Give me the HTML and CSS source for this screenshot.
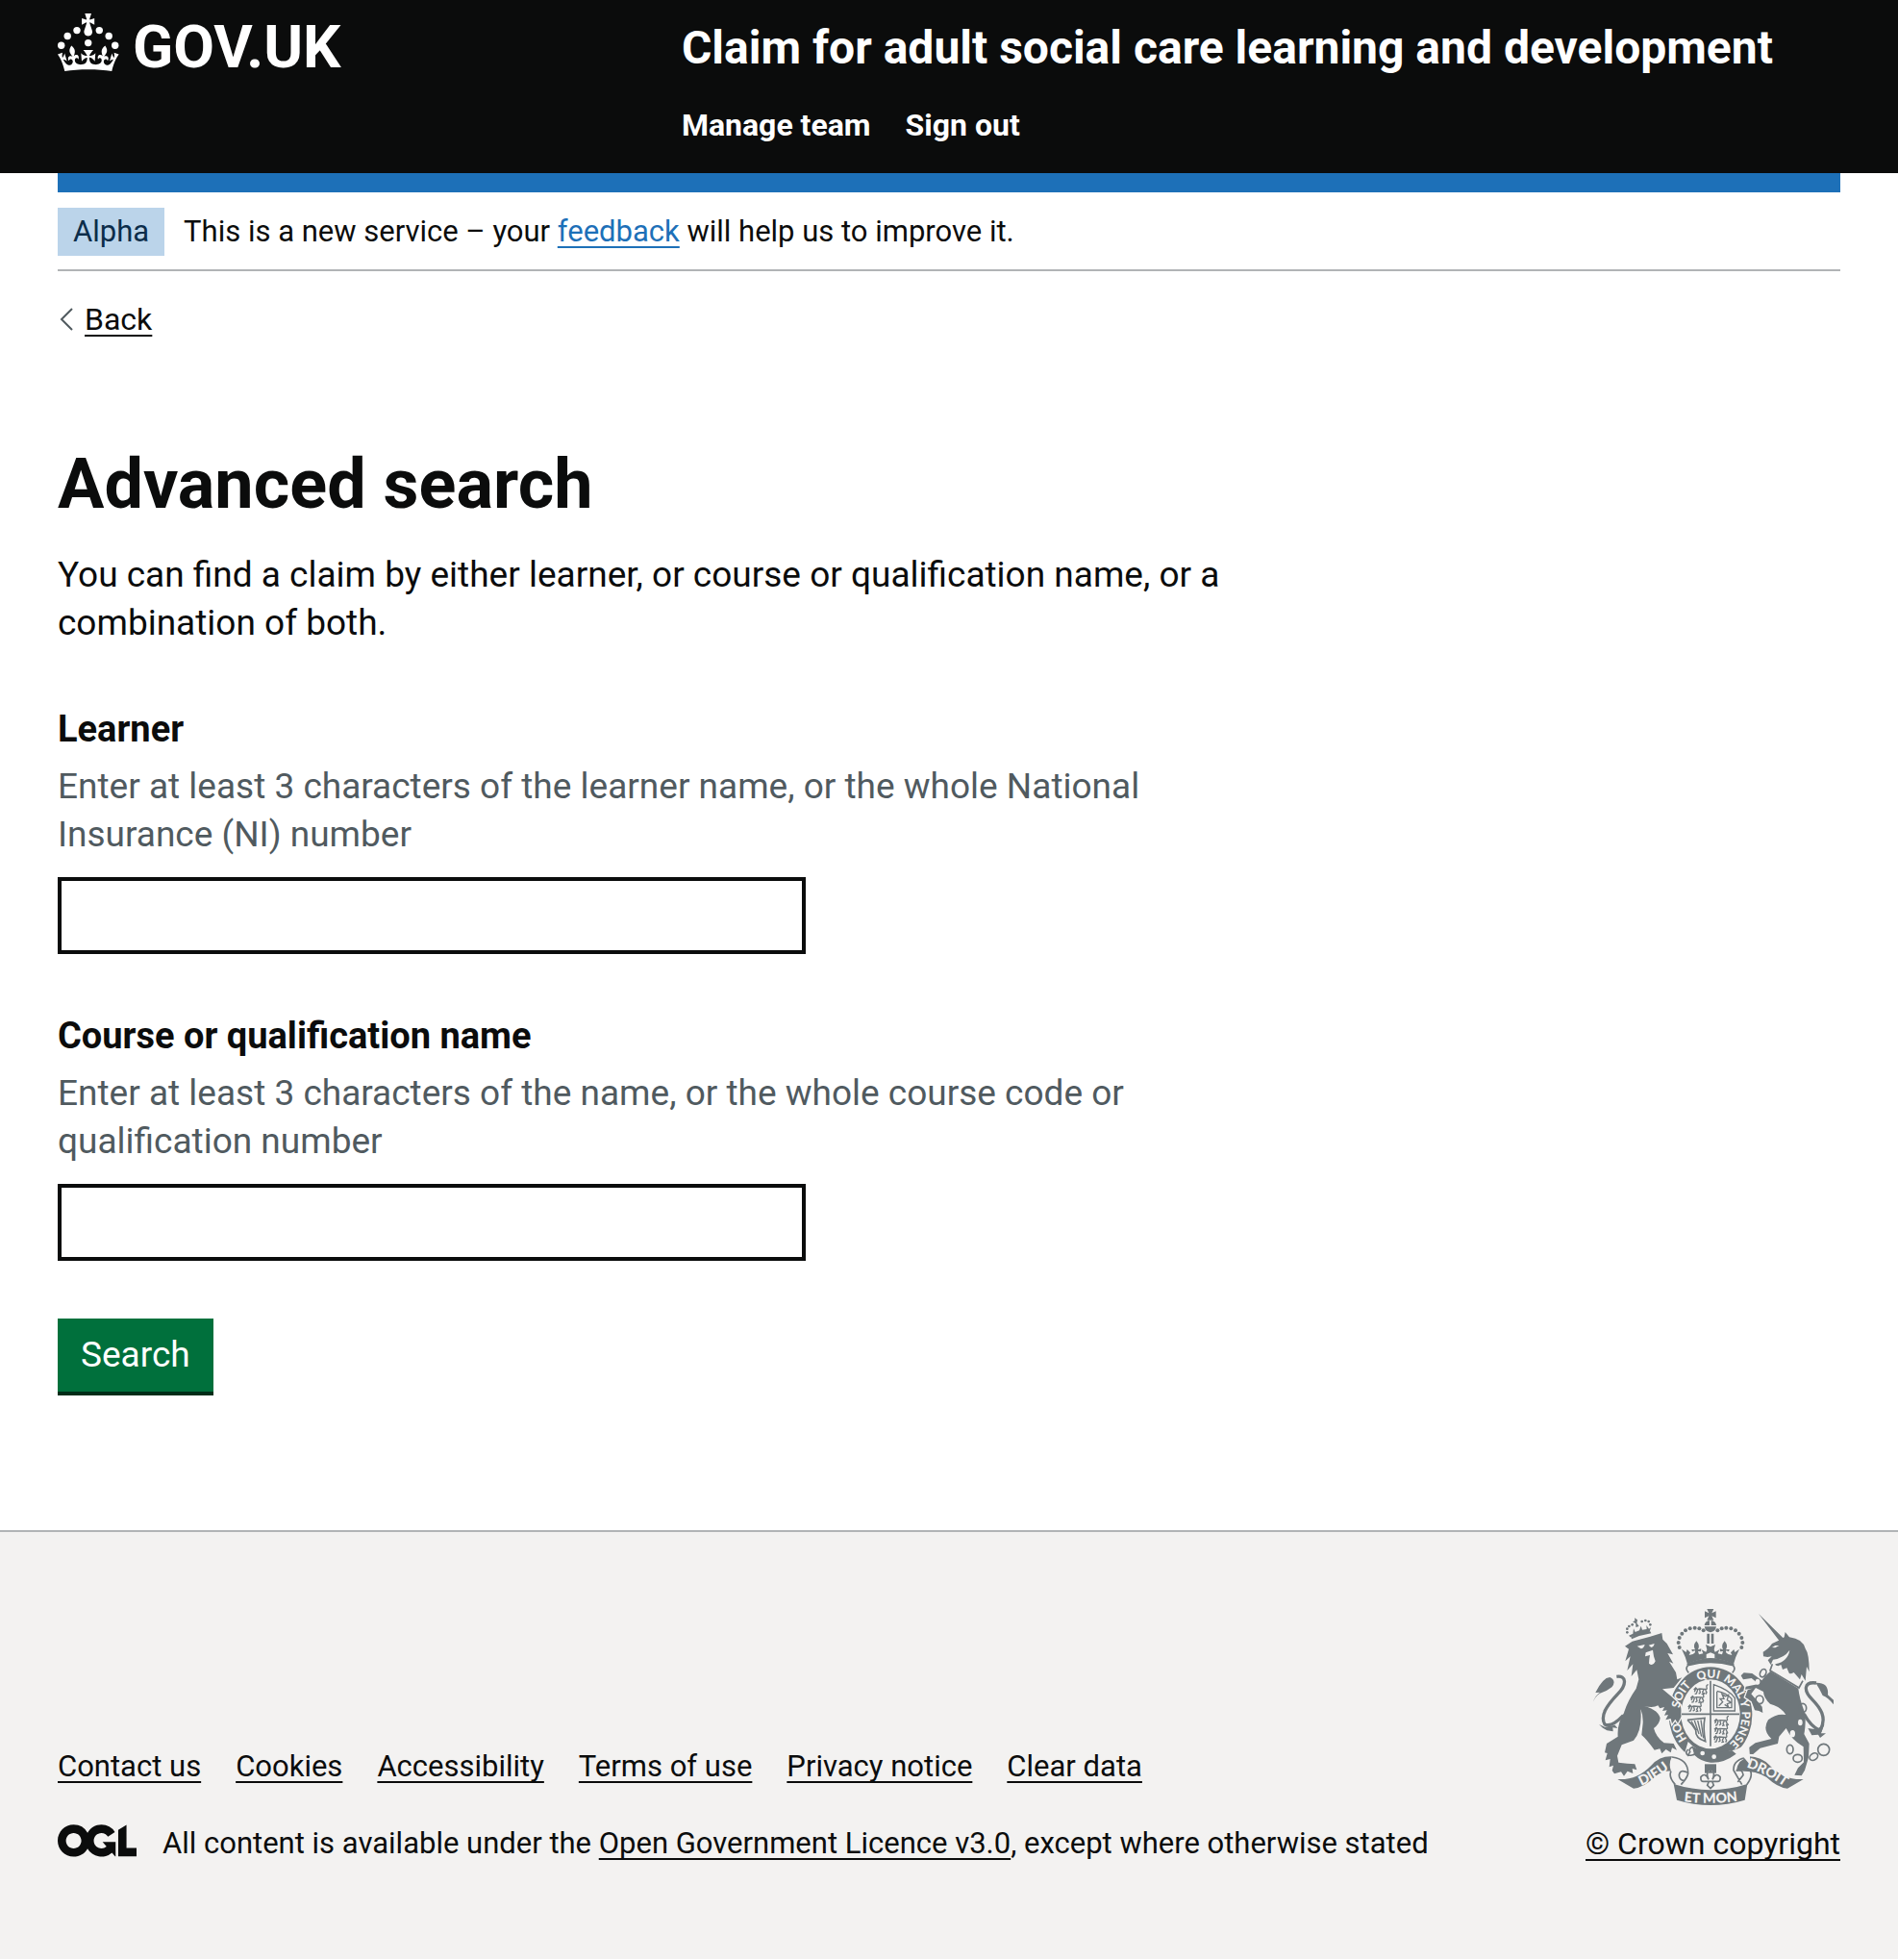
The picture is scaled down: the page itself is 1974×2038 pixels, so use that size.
FILE: index.html
```html
<!DOCTYPE html>
<html lang="en">
<head>
<meta charset="utf-8">
<meta name="viewport" content="width=device-width, initial-scale=1">
<title>Advanced search - Claim for adult social care learning and development - GOV.UK</title>
<link rel="stylesheet" href="styles.css">
</head>
<body>
<header class="header">
  <div class="container header-grid">
    <a class="logo" href="#">
      <svg class="logo-crown" viewBox="0 0 64 60" aria-hidden="true" fill="currentColor">
        <circle cx="20" cy="17.6" r="3.7"/><circle cx="10.2" cy="23.5" r="3.7"/><circle cx="3.7" cy="33.2" r="3.7"/><circle cx="31.7" cy="30.6" r="3.7"/><circle cx="43.3" cy="17.6" r="3.7"/><circle cx="53.2" cy="23.5" r="3.7"/><circle cx="59.7" cy="33.2" r="3.7"/>
        <path d="M33.1,9.8c.2-.1.3-.3.5-.5l4.6,2.4v-6.8l-4.6,1.5c-.1-.2-.3-.3-.5-.5l1.9-5.9h-6.7l1.9,5.9c-.2.1-.3.3-.5.5l-4.6-1.5v6.8l4.6-2.4c.1.2.3.3.5.5l-2.6,8c-.9,2.8,1.2,5.7,4.1,5.7h0c3,0,5.1-2.9,4.1-5.7l-2.6-8ZM37,37.9s-3.4,3.8-4.1,6.1c2.2,0,4.2-.5,6.4-2.8l-.7,8.5c-2-2.8-4.4-4.1-5.7-3.8.1,3.1.5,6.7,5.8,7.2,3.7.3,6.7-1.5,7-3.8.4-2.6-2-4.3-3.7-1.6-1.4-4.5,2.4-6.1,4.9-3.2-1.9-4.5-1.8-7.7,2.4-10.9,3,4,2.6,7.3-1.2,11.1,2.4-1.3,6.2,0,4,4.6-1.2-2.8-3.7-2.2-4.2.2-.3,1.7.7,3.7,3,4.2,1.9.3,4.7-.9,7-5.9-1.3,0-2.4.7-3.9,1.7l2.4-8c.6,2.3,1.4,3.7,2.2,4.5.6-1.6.5-2.8,0-5.3l5,1.8c-2.6,3.6-5.2,8.7-7.3,17.5-7.4-1.1-15.7-1.7-24.5-1.7h0c-8.8,0-17.1.6-24.5,1.7-2.1-8.9-4.7-13.9-7.3-17.5l5-1.8c-.5,2.5-.6,3.7,0,5.3.8-.8,1.6-2.3,2.2-4.5l2.4,8c-1.5-1-2.6-1.7-3.9-1.7,2.3,5,5.2,6.2,7,5.9,2.3-.4,3.3-2.4,3-4.2-.5-2.4-3-3.1-4.2-.2-2.2-4.6,1.6-6,4-4.6-3.7-3.7-4.2-7.1-1.2-11.1,4.2,3.2,4.3,6.4,2.4,10.9,2.5-2.8,6.3-1.3,4.9,3.2-1.8-2.7-4.1-1-3.7,1.6.3,2.3,3.3,4.1,7,3.8,5.4-.5,5.7-4.2,5.8-7.2-1.3-.2-3.7,1-5.7,3.8l-.7-8.5c2.2,2.3,4.2,2.7,6.4,2.8-.7-2.3-4.1-6.1-4.1-6.1h10.6,0Z"/>
      </svg>
      <span class="logo-text">GOV.UK</span>
    </a>
    <div class="header-content">
      <a class="service-name" href="#">Claim for adult social care learning and development</a>
      <nav aria-label="Menu">
        <ul class="nav-list">
          <li><a href="#">Manage team</a></li>
          <li><a href="#">Sign out</a></li>
        </ul>
      </nav>
    </div>
  </div>
</header>

<div class="container">
  <div class="phase-banner">
    <strong class="tag">Alpha</strong>
    <span>This is a new service – your <a class="link" href="#">feedback</a> will help us to improve it.</span>
  </div>
  <a class="back-link" href="#">
    <svg class="chevron" viewBox="0 0 14 24" aria-hidden="true"><path d="M13 1 2 12l11 11" fill="none" stroke="currentColor" stroke-width="2"/></svg>
    <span class="back-text">Back</span>
  </a>
  <main class="main">
    <h1 class="heading">Advanced search</h1>
    <p class="body-text">You can find a claim by either learner, or course or qualification name, or a combination of both.</p>
    <form class="form">
      <div class="form-group">
        <label class="label" for="learner">Learner</label>
        <div class="hint" id="learner-hint">Enter at least 3 characters of the learner name, or the whole National Insurance (NI) number</div>
        <input class="input" id="learner" name="learner" type="text" aria-describedby="learner-hint">
      </div>
      <div class="form-group">
        <label class="label" for="course">Course or qualification name</label>
        <div class="hint" id="course-hint">Enter at least 3 characters of the name, or the whole course code or qualification number</div>
        <input class="input" id="course" name="course" type="text" aria-describedby="course-hint">
      </div>
      <button class="button" type="submit">Search</button>
    </form>
  </main>
</div>

<footer class="footer">
  <div class="container footer-row">
    <div class="footer-meta">
      <ul class="footer-links">
        <li><a href="#">Contact us</a></li>
        <li><a href="#">Cookies</a></li>
        <li><a href="#">Accessibility</a></li>
        <li><a href="#">Terms of use</a></li>
        <li><a href="#">Privacy notice</a></li>
        <li><a href="#">Clear data</a></li>
      </ul>
      <div class="licence">
        <svg class="ogl" viewBox="0 0 483 196" aria-hidden="true" fill="currentColor"><path d="M421.5 142.8V.1l-50.7 32.3v161.1h112.4v-50.7zm-122.3-9.6A47.12 47.12 0 0 1 221 97.8c0-26 21.1-47.1 47.1-47.1 16.7 0 31.4 8.7 39.7 21.8l42.7-27.2A97.63 97.63 0 0 0 268.1 0c-36.5 0-68.3 20.1-85.1 49.7A98 98 0 0 0 97.8 0C43.9 0 0 43.9 0 97.8s43.9 97.8 97.8 97.8c36.5 0 68.3-20.1 85.1-49.7a97.76 97.76 0 0 0 149.6 25.4l19.4 22.2h3v-87.8h-80l24.3 27.5zM97.8 145c-26 0-47.1-21.1-47.1-47.1s21.1-47.1 47.1-47.1 47.1 21.1 47.1 47.1S123.8 145 97.8 145"/></svg>
        <span>All content is available under the <a href="#">Open Government Licence v3.0</a>, except where otherwise stated</span>
      </div>
    </div>
    <div class="crown-copyright">
      <svg class="arms" viewBox="54 42 750 612" aria-hidden="true">
        <defs>
          <path id="garter-line" d="M420 485A98 114 0 0 1 420 257A98 114 0 0 1 420 485"/>
          <path id="scroll-left" d="M186 600Q240 583 306 528"/>
          <path id="scroll-right" d="M522 532Q590 552 658 602"/>
          <path id="scroll-mid" d="M322 641Q420 655 520 639"/>
          <path id="passant" d="M0 6L6 0L11 5L18 3L34 4Q43 6 40-2Q38-8 45-10M6 3L2 13M12 6L8 18L3 19M18 6L20 15L15 19M31 6L27 13L30 19L24 20M36 6L40 14L37 20"/>
          <g id="half-crown">
            <circle cx="398" cy="109" r="6"/><circle cx="385" cy="103" r="6"/><circle cx="371" cy="101" r="6"/><circle cx="356" cy="103" r="6"/><circle cx="342" cy="109" r="6"/><circle cx="331" cy="119" r="6"/><circle cx="323" cy="132" r="6"/><circle cx="320" cy="147" r="6"/><circle cx="323" cy="162" r="6"/>
            <path d="M330 167L344 177L347 168L357 178L353 186L365 183Q375 178 371 172L363 175L361 168L372 169Q364 156 376 142Q388 156 381 169L391 166L390 175L381 174L384 184L397 181L392 169L407 177L407 205L420 205L420 195Q385 197 348 214Q342 190 330 167Z"/>
          </g>
        </defs>
        <g class="arms-fill">
          <!-- garter -->
          <ellipse cx="420" cy="372" rx="130" ry="149"/>
          <!-- crown -->
          <path d="M409 42H430L424 55L437 49V70L424 64L430 77H409L415 64L402 70V49L415 55Z"/>
          <path d="M401 93Q403 80 417 78V93ZM422 78Q436 80 438 93H422Z"/>
          <path d="M401 97H438Q435 113 420 115Q404 113 401 97Z"/>
          <path d="M409 119H417V150H409ZM422 119H430V150H422Z"/>
          <path d="M405 153L420 160L435 153L431 169L438 185L420 178L402 185L409 169Z"/>
          <use href="#half-crown"/><use href="#half-crown" transform="matrix(-1 0 0 1 840 0)"/>
          <path d="M346 213Q420 178 494 213L492 218Q420 199 348 218Z"/>
          <path class="arms-line" d="M349 218Q420 199 491 218Q500 230 488 241M349 218Q340 230 352 241"/>
        </g>
        <g class="arms-fill beast">
          <!-- lion -->
          <path d="M153 158L176 143L232 128L268 117L271 137L284 150L303 184L286 180L304 212L291 206L312 240L316 262L331 256L305 288L270 292L298 315L326 342L332 372L318 398L310 386L300 400L296 384L280 388L288 372L276 374L284 358L270 360L276 348L262 352L256 343Q240 352 212 344Q255 355 263 382Q262 400 243 414Q250 442 275 460L305 462L315 482L300 475L296 490L281 480L268 493L262 478L245 482Q222 450 205 435L209 398Q210 372 202 355Q208 420 180 452L143 466L129 500L133 521L160 524L184 526L190 544L176 540L178 555L161 548L150 563L141 550L120 556L113 546L117 530L104 535L107 510L92 514L98 492L90 490L96 462L131 440Q128 400 150 366Q160 330 188 290L196 262L190 232L173 252L178 214L160 234L170 190L154 205L165 167Z"/>
          <!-- unicorn -->
          <path d="M607 236L694 290Q698 325 716 370Q717 410 712 432L728 462L726 505L714 545L704 562L682 560L693 538L711 520L710 472Q672 450 656 414L634 440L630 462L575 476L553 495L526 494L535 478L560 460L610 447Q580 420 600 388Q625 367 655 372Q640 347 606 338Q586 320 585 300L561 288L547 307L581 347L583 366L571 360L558 358L548 331L528 317L536 295L551 290L528 293L530 284L570 276L548 258L522 262L515 250L524 241L550 243L580 265L590 252Z"/>
        </g>
        <g class="arms-fill">
          <path d="M54 332Q60 312 75 302L61 303Q84 256 106 255Q128 266 112 286Q95 300 75 305Q60 315 54 332ZM72 402L90 410L122 404L130 414L115 412L116 424L97 421L84 413Z"/>
          <path class="arms-line tail" d="M148 374Q112 412 90 402C75 375 95 345 130 308C160 278 158 248 127 253"/>
          <path d="M174 136L172 129Q202 115 232 112L235 118Q202 123 174 136Z"/>
          <g><circle cx="160" cy="104" r="4"/><circle cx="160" cy="115" r="4"/><circle cx="166" cy="96" r="4"/><circle cx="176" cy="91" r="4"/><circle cx="206" cy="81" r="4"/><circle cx="217" cy="78" r="4"/><circle cx="227" cy="81" r="4"/><circle cx="232" cy="91" r="4"/><path d="M183 70L192 76L190 86L197 96L187 99L187 88L177 82L184 79ZM165 125L178 119L180 103L185 114L198 109L203 95L207 107L221 105L220 93L228 104L234 99L230 114L170 130Z"/></g>
          <path d="M570 57L650 136L636 143ZM612 150L636 139L650 130L653 114L666 130Q708 135 716 166Q728 182 728 238L720 222L716 266L704 246L699 262L680 240L667 246L658 226L645 231L640 216L624 223L622 214Q662 205 667 170Q650 195 615 200L608 216L599 202L611 190L598 192L585 190L584 176Q600 168 612 150Z"/>
          <path d="M748 272Q790 270 786 310L804 326V340Q786 318 770 312Q760 290 748 272ZM724 414L750 418L775 402L765 430L780 430L762 444L756 434L736 436Z"/>
          <path class="arms-line tail" d="M712 370Q732 408 762 422C785 380 762 350 738 325C708 295 712 268 750 273"/>
          <g class="arms-line"><ellipse cx="584" cy="242" rx="9" ry="13" transform="rotate(25 584 242)"/><ellipse cx="573" cy="325" rx="12" ry="13"/><ellipse cx="708" cy="351" rx="11" ry="14"/><ellipse cx="668" cy="480" rx="10" ry="14"/><ellipse cx="692" cy="508" rx="14" ry="12"/><ellipse cx="742" cy="503" rx="14" ry="10" transform="rotate(-35 742 503)"/><circle cx="773" cy="481" r="18"/></g>
          <!-- scroll -->
          <path d="M130 573Q190 577 235 530Q262 500 300 502Q288 525 297 548Q270 544 245 567Q210 600 180 602ZM710 573Q650 577 605 530Q578 503 540 502Q505 512 500 548Q560 545 595 567Q630 600 660 602ZM305 588Q420 625 535 588L527 638Q420 670 315 638Z"/>
          <path class="arms-line" d="M300 504Q350 510 350 555Q348 568 328 590M297 548Q288 565 310 590M350 553Q325 540 322 560Q322 575 338 578M540 504Q490 510 492 545L518 590M500 546Q520 540 522 560L505 582M545 548Q552 565 533 590"/>
        </g>
        <g class="arms-light">
          <ellipse cx="420" cy="370" rx="92" ry="108"/>
          <path d="M191 158L215 153Q212 165 203 166ZM227 155L245 150Q243 161 235 162ZM218 178L240 170L243 190L248 205Q240 222 228 212L229 198L231 186L216 190Z"/>
          <path d="M612 162L622 156L634 156L622 163Z"/>
          <path d="M613 214L608 234L697 285L708 265L695 264L688 255L675 262L670 242L655 250L648 230L634 238L630 220Z"/>
          <ellipse cx="700" cy="396" rx="7" ry="10"/><ellipse cx="676" cy="431" rx="8" ry="11"/><ellipse cx="567" cy="269" rx="7" ry="9"/>
          <path d="M350 456Q390 500 450 492L500 480L540 462L545 530L520 500Q470 530 420 524Q360 520 340 490Z"/>
        </g>
        <g class="arms-fill">
          <path d="M362 470Q410 495 487 483L500 494Q460 524 420 521Q390 518 370 498Z"/>
          <path d="M402 526H438V554H402Z"/>
          <path d="M446 478L500 452L490 482Z"/>
          <path class="arms-line" d="M366 472Q350 478 356 488Q345 502 362 498Q376 496 370 484M350 480Q338 492 352 500"/>
          <path class="arms-line" d="M613 214L606 234L696 288L708 266"/>
          <!-- shield quarters -->
          <path class="arms-line" d="M420 266V470M330 370H510"/>
          <path class="arms-line thin" d="M430 285V360H496V320Q480 295 430 278ZM440 300V350H486V322Q470 304 440 298M446 344L458 332L450 322L462 322L456 308L466 314L476 310L472 326L484 334L472 338L476 348L464 340"/>
          <path class="arms-line" d="M348 388L402 382Q396 415 404 455Q372 445 374 420Q362 400 348 388"/>
          <path class="arms-line thin" d="M360 392L376 420M370 390L384 432M380 390L392 440M390 388L398 445"/>
        </g>
        <g class="arms-line thin">
          <use href="#passant" x="368" y="288"/><use href="#passant" x="358" y="314"/><use href="#passant" x="350" y="342"/>
          <use href="#passant" x="432" y="386"/><use href="#passant" x="432" y="412"/><use href="#passant" x="430" y="438"/>
        </g>
        <path class="fleur" d="M420 538Q403 552 414 574Q404 550 390 566Q388 582 400 580M420 538Q437 552 426 574Q436 550 450 566Q452 582 440 580M400 580H440M414 582L410 592L420 602L430 592L426 582"/>
        <g class="arms-light"><circle cx="395" cy="492" r="7"/><circle cx="431" cy="503" r="7"/></g>
        <g class="garter-text">
          <text><textPath href="#garter-line" startOffset="17%">HO</textPath></text>
          <text><textPath href="#garter-line" startOffset="34%">SOIT</textPath></text>
          <text><textPath href="#garter-line" startOffset="49%">QUI</textPath></text>
          <text><textPath href="#garter-line" startOffset="64%">MAL Y</textPath></text>
          <text><textPath href="#garter-line" startOffset="82%">PENSE</textPath></text>
        </g>
        <g class="scroll-text">
          <text><textPath href="#scroll-left" startOffset="50%">DIEU</textPath></text>
          <text><textPath href="#scroll-mid" startOffset="50%">ET MON</textPath></text>
          <text><textPath href="#scroll-right" startOffset="50%">DROIT</textPath></text>
        </g>
      </svg>
      <a href="#">© Crown copyright</a>
    </div>
  </div>
</footer>
</body>
</html>
```
FILE: styles.css
```css
:root {
  --ink: #0b0c0c;
  --muted: #505a5f;
  --rule: #b1b4b6;
  --blue: #1d70b8;
  --panel: #f3f2f1;
  --arms: #6f777b;
}

* {
  box-sizing: border-box;
}

body {
  margin: 0;
  background: #fff;
  color: var(--ink);
  font-family: Roboto, "Liberation Sans", sans-serif;
  font-size: 31px;
  line-height: 40px;
}

ul {
  display: flex;
  flex-wrap: wrap;
  margin: 0;
  padding: 0;
  list-style: none;
}

a {
  color: inherit;
  text-decoration-thickness: 2px;
  text-underline-offset: 5px;
  text-decoration-skip-ink: none;
}

.container {
  margin: 0 60px;
}

.header {
  background: var(--ink);
  color: #fff;
}

.header a {
  text-decoration: none;
}

.header-grid {
  display: grid;
  grid-template-columns: 35% 1fr;
  align-items: start;
}

.logo {
  display: flex;
  align-items: flex-start;
  gap: 14px;
  padding-top: 14px;
}

.logo-crown {
  width: 64px;
  height: 60px;
}

.logo-text {
  font-size: 62px;
  font-weight: 700;
  line-height: 70px;
}

.header-content {
  padding: 22px 0 30px;
}

.service-name {
  display: block;
  margin-bottom: 32px;
  font-size: 48px;
  font-weight: 700;
  line-height: 56px;
}

.nav-list {
  gap: 36px;
  font-size: 32px;
  font-weight: 700;
}

.phase-banner {
  display: flex;
  align-items: center;
  gap: 20px;
  padding: 16px 0 14px;
  border-top: 20px solid var(--blue);
  border-bottom: 2px solid var(--rule);
}

.tag {
  padding: 5px 16px;
  background: #bbd4ea;
  color: #0c2d4a;
  font-weight: 400;
}

.link {
  color: var(--blue);
}

.back-link {
  display: flex;
  align-items: center;
  gap: 12px;
  width: fit-content;
  margin-top: 30px;
  padding-left: 2px;
  font-size: 32px;
  text-decoration: none;
}

.chevron {
  width: 14px;
  height: 24px;
  color: var(--muted);
}

.back-text {
  text-decoration: underline 2px;
  text-underline-offset: 5px;
}

.main {
  max-width: 1216px;
  padding: 112px 0 140px;
  font-size: 37px;
  line-height: 50px;
}

.heading {
  margin: 0 0 29px;
  font-size: 72px;
  font-weight: 700;
  line-height: 80px;
}

.body-text {
  margin: 0 0 60px;
}

.form-group {
  margin-bottom: 60px;
}

.label {
  display: block;
  margin-bottom: 10px;
  font-size: 38px;
  font-weight: 700;
}

.hint {
  margin-bottom: 19px;
  color: var(--muted);
}

.input {
  display: block;
  width: 64%;
  height: 80px;
  padding: 10px;
  border: 4px solid var(--ink);
  border-radius: 0;
  background: #fff;
  font: inherit;
}

.button {
  display: block;
  margin: 0 0 4px;
  padding: 13px 24px;
  border: 0;
  background: #00703c;
  box-shadow: 0 4px 0 #002d18;
  color: #fff;
  font: inherit;
}

.footer {
  padding: 80px 0 100px;
  border-top: 2px solid var(--rule);
  background: var(--panel);
}

.footer-row {
  display: flex;
  align-items: flex-end;
  justify-content: space-between;
  gap: 40px;
}

.footer-links {
  gap: 36px;
  margin-bottom: 40px;
}

.licence {
  display: flex;
  align-items: flex-start;
  gap: 27px;
}

.ogl {
  flex: none;
  width: 82px;
  height: 34px;
}

.crown-copyright {
  display: flex;
  flex: none;
  flex-direction: column;
  align-items: center;
  gap: 20px;
  font-size: 32px;
}

.arms {
  width: 250px;
  height: 204px;
}

.arms-fill {
  fill: var(--arms);
}

.arms-light {
  fill: var(--panel);
}

.beast {
  stroke: var(--panel);
  stroke-width: 8px;
  paint-order: stroke;
}

.arms-line {
  fill: none;
  stroke: var(--arms);
  stroke-width: 5px;
}

.arms-line.tail {
  stroke-width: 10px;
}

.arms-line.thin {
  stroke-width: 4px;
}

.fleur {
  fill: var(--panel);
  stroke: var(--arms);
  stroke-width: 5px;
}

.garter-text,
.scroll-text {
  fill: var(--panel);
  font-family: Lato, sans-serif;
  font-size: 36px;
  font-weight: 900;
  text-anchor: middle;
}

.scroll-text {
  font-size: 43px;
}
```
